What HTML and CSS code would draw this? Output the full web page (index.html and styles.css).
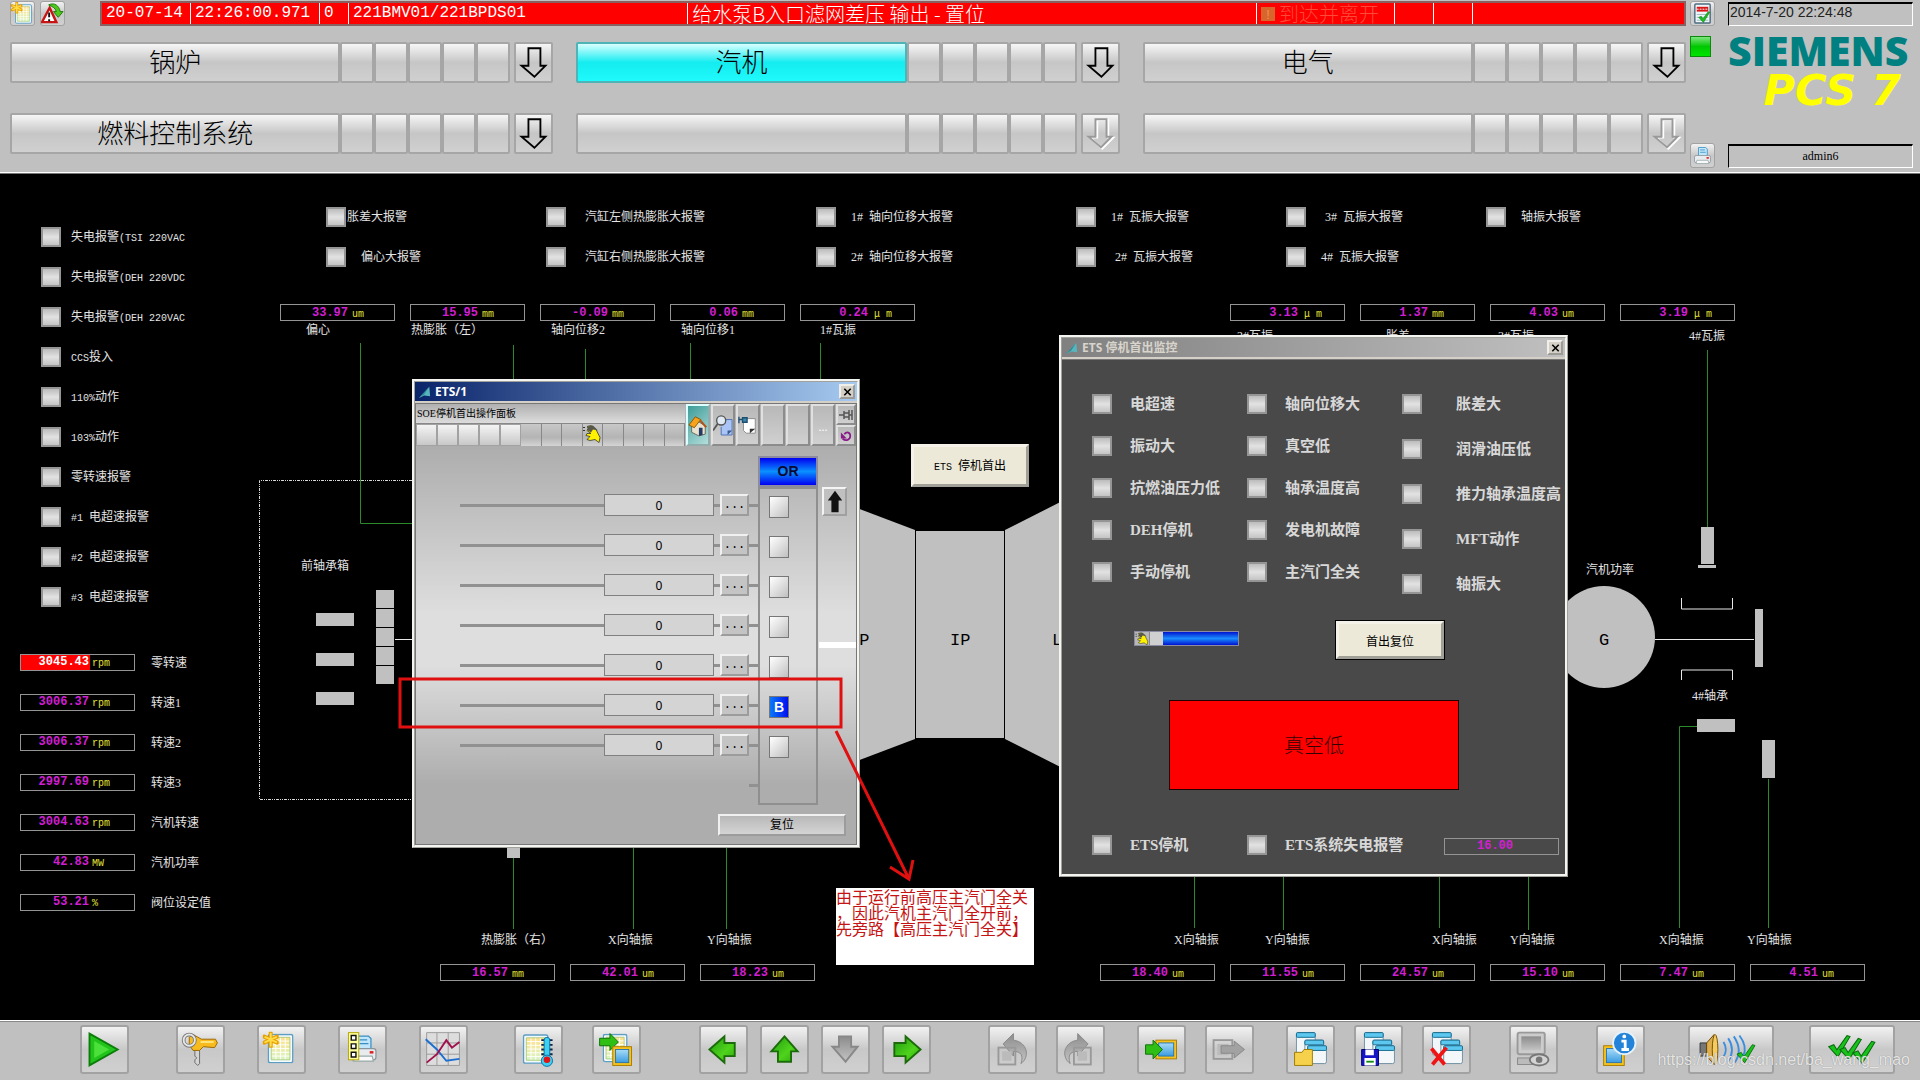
FILE: index.html
```html
<!DOCTYPE html>
<html lang="zh-CN">
<head>
<meta charset="utf-8">
<title>SIEMENS PCS 7 - 汽机 ETS</title>
<link rel="stylesheet" href="styles.css">
</head>
<body>
<svg class="defs" aria-hidden="true">
  <defs>
    <linearGradient id="gGreen" x1="0" y1="0" x2="1" y2="1"><stop offset="0" stop-color="#1d9a10"/><stop offset=".6" stop-color="#4fd31c"/><stop offset="1" stop-color="#2fa80f"/></linearGradient>
    <linearGradient id="gGrey" x1="0" y1="0" x2="0" y2="1"><stop offset="0" stop-color="#8c8c8c"/><stop offset="1" stop-color="#c4c4c4"/></linearGradient>
    <linearGradient id="gSheet" x1="0" y1="0" x2="0" y2="1"><stop offset="0" stop-color="#ffe08a"/><stop offset="1" stop-color="#d9f5c4"/></linearGradient>
    <linearGradient id="gBlue" x1="0" y1="0" x2="0" y2="1"><stop offset="0" stop-color="#a8dcf8"/><stop offset="1" stop-color="#3a9be0"/></linearGradient>
    <symbol id="sheet" viewBox="0 0 28 32"><rect x="1" y="1" width="26" height="30" rx="2" fill="#f4fbff" stroke="#5c9dc4" stroke-width="1.5"/><rect x="4" y="4" width="20" height="24" fill="url(#gSheet)"/><path d="M4 8h20M4 12h20M4 16h20M4 20h20M4 24h20M9 4v24M14 4v24M19 4v24" stroke="#fff" stroke-width="1"/><path d="M4 4h20v24H4z" fill="none" stroke="#9cc06c" stroke-width=".8"/></symbol>
    <symbol id="star" viewBox="0 0 16 16"><path d="M8 1v14M1.5 5l13 6M1.5 11l13-6" stroke="#e8a000" stroke-width="4" stroke-linecap="round"/><path d="M8 2v12M2.500 5.500l11 5M2.500 10.500l11-5" stroke="#ffdc48" stroke-width="2" stroke-linecap="round"/></symbol>
    <symbol id="down" viewBox="0 0 38 40"><path d="M13.500 4.500h13v19h5.500L20 35.500 6 23.500h7.500z" fill="none" stroke="currentColor" stroke-width="2"/></symbol>
    <symbol id="downOff" viewBox="0 0 38 40"><path d="M15.500 5.500h12v19h5.500L21 36.500 8 24.500h7.500z" fill="none" stroke="#fff" stroke-width="2"/><path d="M13.500 4.500h12v19h5.500L19.500 35 6 23.500h7.500z" fill="none" stroke="#999" stroke-width="2"/></symbol>
    <symbol id="siemensMark" viewBox="0 0 14 14"><path d="M12 1L0 14l6-3 7 1z" fill="#57b6bd"/><path d="M12 1L6 10l-6 4z" fill="#2a8a94"/></symbol>
    <symbol id="printer" viewBox="0 0 24 24"><path d="M7 2h9l2 2v9H7z" fill="#bfe6fa" stroke="#3b8fc0"/><path d="M9 5h6M9 8h7" stroke="#3b8fc0"/><rect x="2" y="12" width="20" height="9" rx="2" fill="#e8ecef" stroke="#8a949c"/><path d="M5 18h14l1 4H4z" fill="#fafafa" stroke="#9aa"/><rect x="17" y="14" width="3" height="2" fill="#d22"/></symbol>
    <symbol id="hand" viewBox="0 0 18 18"><path d="M4 2l4-1 5 4 4 8-1 5-4-3-5 1-3-1 3-3-4-1 1-2 4 0-4-3 1-2 4 2z" fill="#fff200" stroke="#222" stroke-width=".7"/><path d="M4 2l6-1 5 5-5-1-2 3-3-2z" fill="#57574a"/><path d="M0 3h2M0 6h2" stroke="#333"/></symbol>
    <symbol id="panels" viewBox="0 0 48 48"><g fill="#f3f7f9" stroke="#6d8ea0"><rect x="9" y="6" width="20" height="24" rx="2"/><rect x="18" y="14" width="20" height="24" rx="2"/><rect x="21" y="20" width="20" height="19" rx="2"/></g><g fill="#5cc8f0" stroke="#12688c"><rect x="9" y="6" width="20" height="5" rx="1"/><rect x="18" y="14" width="20" height="5" rx="1"/><rect x="21" y="20" width="20" height="5" rx="1"/></g></symbol>
    <symbol id="check" viewBox="0 0 24 24"><path d="M2 13l5-2 3 5L20 2l3 1L11 23z" fill="#17c21b" stroke="#086b0c"/></symbol>
  </defs>
</svg>

<header class="top">
  <div class="top-main">
    <div class="message-row">
      <button class="tool small" aria-label="消息列表"><svg viewBox="0 0 24 24"><use href="#sheet" x="4" y="2" width="18" height="21"/><use href="#star" x="0" y="0" width="12" height="12"/></svg></button>
      <button class="tool small" aria-label="报警跳转"><svg viewBox="0 0 24 24"><path d="M9 6L1 21h15z" fill="#fff" stroke="#c81414" stroke-width="2.500"/><path d="M8.500 11v5M8.500 18v2" stroke="#111" stroke-width="2"/><path d="M8 3c6-3 11 1 12 7h3l-5 6-5-6h3c-1-4-4-5-8-7z" fill="#4fc81c" stroke="#1c7a0a"/></svg></button>
      <div class="message">
        <span class="m-date">20-07-14</span><span class="m-time">22:26:00.971</span><span class="m-num">0</span><span class="m-tag">221BMV01/221BPDS01</span><span class="m-text cjk">给水泵B入口滤网差压 输出 - 置位</span><span class="m-state cjk"><i>!</i>到达并离开</span><span class="m-end"></span><span class="m-end"></span><span class="m-rest"></span>
      </div>
    </div>
    <nav class="areas">
      <div class="area"><button class="area-name">锅炉</button><i></i><i></i><i></i><i></i><i></i><button class="area-down" aria-label="展开"><svg><use href="#down"/></svg></button></div>
      <div class="area"><button class="area-name active">汽机</button><i></i><i></i><i></i><i></i><i></i><button class="area-down" aria-label="展开"><svg><use href="#down"/></svg></button></div>
      <div class="area"><button class="area-name">电气</button><i></i><i></i><i></i><i></i><i></i><button class="area-down" aria-label="展开"><svg><use href="#down"/></svg></button></div>
      <div class="area"><button class="area-name">燃料控制系统</button><i></i><i></i><i></i><i></i><i></i><button class="area-down" aria-label="展开"><svg><use href="#down"/></svg></button></div>
      <div class="area"><button class="area-name" aria-label="空"></button><i></i><i></i><i></i><i></i><i></i><button class="area-down" aria-label="展开" disabled><svg><use href="#downOff"/></svg></button></div>
      <div class="area"><button class="area-name" aria-label="空"></button><i></i><i></i><i></i><i></i><i></i><button class="area-down" aria-label="展开" disabled><svg><use href="#downOff"/></svg></button></div>
    </nav>
  </div>
  <div class="top-status">
    <button class="tool small" aria-label="确认消息"><svg viewBox="0 0 24 24"><rect x="4" y="2" width="16" height="20" rx="1" fill="#eef6fb" stroke="#4d6c80" stroke-width="1.500"/><path d="M6 5h12v5H6z" fill="#d81414"/><path d="M6 7.500h12" stroke="#fff" stroke-dasharray="2 1"/><path d="M6 13h12M6 16h12M6 19h12" stroke="#9bb"/><use href="#check" x="6" y="9" width="15" height="13"/></svg></button>
    <span class="run-lamp"></span>
    <button class="tool small printer" aria-label="打印"><svg viewBox="0 0 24 24"><use href="#printer" x="2" y="2" width="20" height="20"/></svg></button>
  </div>
  <div class="brand">
    <time class="clock">2014-7-20 22:24:48</time>
    <div class="siemens">SIEMENS</div>
    <div class="pcs">PCS 7</div>
    <div class="user">admin6</div>
  </div>
</header>

<main class="canvas">
  <svg class="mimic" aria-label="汽机监视图">
    <g transform="translate(0 -173)">
      <g class="pipe">
        <path d="M360.500 343V523.500H412"/>
        <path d="M513.500 345v40M585.500 349v40M690.500 343v40M820.500 343v40M1707.500 350v178"/>
        <path d="M513.500 858v71M633.500 846v83M726.500 846v83M1194.500 873v55M1283.500 873v57M1439.500 873v55M1528.500 873v57M1697 726.500h-17.500V928M1768.500 779v149"/>
      </g>
      <path class="boundary" d="M412 480.500H259.500V799.500H412"/>
      <g class="block">
        <rect x="316" y="613" width="38" height="13"/><rect x="316" y="653" width="38" height="13"/><rect x="316" y="692" width="38" height="13"/>
        <rect x="376" y="590" width="18" height="18"/><rect x="376" y="609" width="18" height="18"/><rect x="376" y="628" width="18" height="18"/><rect x="376" y="647" width="18" height="18"/><rect x="376" y="666" width="18" height="18"/>
        <rect x="507" y="844" width="13" height="14"/>
        <path d="M820 494L915 530V739L820 775z"/>
        <rect x="916" y="531" width="88" height="207"/>
        <path d="M1005 530L1100 482V787L1005 739z"/>
        <circle cx="1604" cy="637" r="51"/>
        <rect x="1701" y="527" width="13" height="37"/><rect x="1698" y="565" width="18" height="3"/>
        <rect x="1755" y="609" width="8" height="58"/>
        <rect x="1697" y="719" width="38" height="13"/><rect x="1762" y="740" width="13" height="38"/>
      </g>
      <path class="shaft" d="M395 639.500h17M1655 639.500h99M1681.500 598v11h51v-11M1681.500 680v-10h51v10"/>
      <g class="stage"><text x="849" y="645">HP</text><text x="950" y="645">IP</text><text x="1052" y="645">LP</text><text x="1599" y="645">G</text></g>
      <g class="tag">
        <text x="306" y="334">偏心</text><text x="411" y="334">热膨胀（左）</text><text x="551" y="334">轴向位移2</text><text x="681" y="334">轴向位移1</text><text x="820" y="334">1#瓦振</text>
        <text x="1237" y="340">2#瓦振</text><text x="1386" y="340">胀差</text><text x="1498" y="340">3#瓦振</text><text x="1689" y="340">4#瓦振</text>
        <text x="301" y="570">前轴承箱</text><text x="1586" y="574">汽机功率</text><text x="1692" y="700">4#轴承</text>
        <text x="481" y="944">热膨胀（右）</text><text x="608" y="944">X向轴振</text><text x="707" y="944">Y向轴振</text>
        <text x="1174" y="944">X向轴振</text><text x="1265" y="944">Y向轴振</text><text x="1432" y="944">X向轴振</text><text x="1510" y="944">Y向轴振</text><text x="1659" y="944">X向轴振</text><text x="1747" y="944">Y向轴振</text>
      </g>
      <g class="reading">
        <g transform="translate(280 304)"><rect/><text class="num" x="68" y="12">33.97</text><text class="unit" x="72" y="13">um</text></g>
        <g transform="translate(410 304)"><rect/><text class="num" x="68" y="12">15.95</text><text class="unit" x="72" y="13">mm</text></g>
        <g transform="translate(540 304)"><rect/><text class="num" x="68" y="12">-0.09</text><text class="unit" x="72" y="13">mm</text></g>
        <g transform="translate(670 304)"><rect/><text class="num" x="68" y="12">0.06</text><text class="unit" x="72" y="13">mm</text></g>
        <g transform="translate(800 304)"><rect/><text class="num" x="68" y="12">0.24</text><text class="unit" x="74" y="13">μ m</text></g>
        <g transform="translate(1230 304)"><rect/><text class="num" x="68" y="12">3.13</text><text class="unit" x="74" y="13">μ m</text></g>
        <g transform="translate(1360 304)"><rect/><text class="num" x="68" y="12">1.37</text><text class="unit" x="72" y="13">mm</text></g>
        <g transform="translate(1490 304)"><rect/><text class="num" x="68" y="12">4.03</text><text class="unit" x="72" y="13">um</text></g>
        <g transform="translate(1620 304)"><rect/><text class="num" x="68" y="12">3.19</text><text class="unit" x="74" y="13">μ m</text></g>
        <g transform="translate(440 964)"><rect/><text class="num" x="68" y="12">16.57</text><text class="unit" x="72" y="13">mm</text></g>
        <g transform="translate(570 964)"><rect/><text class="num" x="68" y="12">42.01</text><text class="unit" x="72" y="13">um</text></g>
        <g transform="translate(700 964)"><rect/><text class="num" x="68" y="12">18.23</text><text class="unit" x="72" y="13">um</text></g>
        <g transform="translate(1100 964)"><rect/><text class="num" x="68" y="12">18.40</text><text class="unit" x="72" y="13">um</text></g>
        <g transform="translate(1230 964)"><rect/><text class="num" x="68" y="12">11.55</text><text class="unit" x="72" y="13">um</text></g>
        <g transform="translate(1360 964)"><rect/><text class="num" x="68" y="12">24.57</text><text class="unit" x="72" y="13">um</text></g>
        <g transform="translate(1490 964)"><rect/><text class="num" x="68" y="12">15.10</text><text class="unit" x="72" y="13">um</text></g>
        <g transform="translate(1620 964)"><rect/><text class="num" x="68" y="12">7.47</text><text class="unit" x="72" y="13">um</text></g>
        <g transform="translate(1750 964)"><rect/><text class="num" x="68" y="12">4.51</text><text class="unit" x="72" y="13">um</text></g>
      </g>
    </g>
  </svg>

  <aside class="side">
    <ul class="lamps">
      <li><b class="lamp"></b><span>失电报警<span class="code">(TSI 220VAC</span></span></li>
      <li><b class="lamp"></b><span>失电报警<span class="code">(DEH 220VDC</span></span></li>
      <li><b class="lamp"></b><span>失电报警<span class="code">(DEH 220VAC</span></span></li>
      <li><b class="lamp"></b><span><span class="code">CCS</span>投入</span></li>
      <li><b class="lamp"></b><span><span class="code">110%</span>动作</span></li>
      <li><b class="lamp"></b><span><span class="code">103%</span>动作</span></li>
      <li><b class="lamp"></b>零转速报警</li>
      <li><b class="lamp"></b><span><span class="code">#1 </span>电超速报警</span></li>
      <li><b class="lamp"></b><span><span class="code">#2 </span>电超速报警</span></li>
      <li><b class="lamp"></b><span><span class="code">#3 </span>电超速报警</span></li>
    </ul>
    <ul class="speeds">
      <li><span class="box"><b class="alarm">3045.43</b><em>rpm</em></span>零转速</li>
      <li><span class="box"><b>3006.37</b><em>rpm</em></span>转速1</li>
      <li><span class="box"><b>3006.37</b><em>rpm</em></span>转速2</li>
      <li><span class="box"><b>2997.69</b><em>rpm</em></span>转速3</li>
      <li><span class="box"><b>3004.63</b><em>rpm</em></span>汽机转速</li>
      <li><span class="box"><b>42.83</b><em>MW</em></span>汽机功率</li>
      <li><span class="box"><b>53.21</b><em>%</em></span>阀位设定值</li>
    </ul>
  </aside>

  <ul class="alarms">
    <li class="tight"><b class="lamp"></b>胀差大报警</li>
    <li class="wide"><b class="lamp"></b>汽缸左侧热膨胀大报警</li>
    <li><b class="lamp"></b>1#&nbsp; 轴向位移大报警</li>
    <li><b class="lamp"></b>1#&nbsp; 瓦振大报警</li>
    <li class="wide"><b class="lamp"></b>3#&nbsp; 瓦振大报警</li>
    <li><b class="lamp"></b>轴振大报警</li>
    <li><b class="lamp"></b>偏心大报警</li>
    <li class="wide"><b class="lamp"></b>汽缸右侧热膨胀大报警</li>
    <li><b class="lamp"></b>2#&nbsp; 轴向位移大报警</li>
    <li class="wide"><b class="lamp"></b>2#&nbsp; 瓦振大报警</li>
    <li><b class="lamp"></b>4#&nbsp; 瓦振大报警</li>
  </ul>

  <button class="classic open-ets"><span class="code">ETS </span>停机首出</button>

  <section class="window ets1">
    <div class="title"><svg><use href="#siemensMark"/></svg><span>ETS/1</span><button class="close" aria-label="关闭"><svg viewBox="0 0 10 10"><path d="M1 1l8 8M9 1l-8 8"/></svg></button></div>
    <div class="faceplate">
      <div class="face-head">
        <div class="face-left">
          <div class="face-name">SOE停机首出操作面板</div>
          <div class="face-cells"><i></i><i></i><i></i><i></i><i></i><s></s><s></s><s></s><s><svg><use href="#hand"/></svg></s><s></s><s></s><s></s><s></s></div>
        </div>
        <button class="view on" aria-label="主视图"><svg viewBox="0 0 22 24"><path d="M4 12l7-4 8 5v9l-7 2-8-4z" fill="#e9e2cf" stroke="#665"/><path d="M1 12L8 3l6 3-7 9z" fill="#f6a21a" stroke="#8a5200"/><path d="M14 6l7 8-2 1-6-7z" fill="#b4521a"/><path d="M12 15h4v8l-4 1z" fill="#243a66"/></svg></button>
        <button class="view" aria-label="趋势"><svg viewBox="0 0 22 24"><path d="M10 6h11v17H9v-9" fill="#a9c4f5" stroke="#4a6db0"/><path d="M16 23v-5h5z" fill="#3a5a90"/><circle cx="9" cy="7" r="5" fill="#dfeaf5" stroke="#555" stroke-width="1.500"/><path d="M5 11l-5 7" stroke="#555" stroke-width="2"/></svg></button>
        <button class="view" aria-label="附注"><svg viewBox="0 0 22 24"><path d="M6 5h13v16H9l-3-3z" fill="#fff" stroke="#888"/><path d="M13 21v-5h6z" fill="#333"/><path d="M1 3v7M1 6h4M5 4v5h5V4z" fill="#3a88b0" stroke="#1f4f6e" stroke-width="1.500"/></svg></button>
        <button class="view" aria-label="视图 4"></button><button class="view" aria-label="视图 5"></button><button class="view more" aria-label="更多">...</button>
        <div class="view-small"><button aria-label="固定"><svg viewBox="0 0 14 12"><path d="M0 6h5M5 2v8M5 4h5v4H5M10 1v10M13 1v10M10 6h3" fill="none" stroke="#555" stroke-width="1.500"/></svg></button><button aria-label="返回"><svg viewBox="0 0 14 14"><path d="M3 10c4 4 9 1 9-3s-4-6-7-2" fill="none" stroke="#8a1a8a" stroke-width="2"/><path d="M1 3v7h7z" fill="#8a1a8a"/></svg></button></div>
      </div>
      <div class="face-body">
        <div class="inputs">
          <div class="input-row"><hr><input aria-label="输入 1" value="0"><hr class="short"><button>...</button><hr class="tail"></div>
          <div class="input-row"><hr><input aria-label="输入 2" value="0"><hr class="short"><button>...</button><hr class="tail"></div>
          <div class="input-row"><hr><input aria-label="输入 3" value="0"><hr class="short"><button>...</button><hr class="tail"></div>
          <div class="input-row"><hr><input aria-label="输入 4" value="0"><hr class="short"><button>...</button><hr class="tail"></div>
          <div class="input-row"><hr><input aria-label="输入 5" value="0"><hr class="short"><button>...</button><hr class="tail"></div>
          <div class="input-row"><hr><input aria-label="输入 6" value="0"><hr class="short"><button>...</button><hr class="tail"></div>
          <div class="input-row"><hr><input aria-label="输入 7" value="0"><hr class="short"><button>...</button><hr class="tail"></div>
          <div class="input-row last"><hr class="tail"></div>
        </div>
        <div class="gate">
          <div class="gate-name">OR</div>
          <div class="gate-box"><button aria-label="旁路 1"></button><button aria-label="旁路 2"></button><button aria-label="旁路 3"></button><button aria-label="旁路 4"></button><button aria-label="旁路 5"></button><button class="bypassed">B</button><button aria-label="旁路 7"></button></div>
        </div>
        <div class="output"><button aria-label="上一页"><svg viewBox="0 0 20 26"><path d="M10 1l8 11h-4v13H6V12H2z" fill="#111"/></svg></button><hr></div>
        <button class="reset">复位</button>
      </div>
    </div>
  </section>

  <section class="window ets2">
    <div class="title"><svg><use href="#siemensMark"/></svg><span>ETS 停机首出监控</span><button class="close" aria-label="关闭"><svg viewBox="0 0 10 10"><path d="M1 1l8 8M9 1l-8 8"/></svg></button></div>
    <div class="first-out">
      <div class="causes">
        <ul><li><b class="lamp"></b>电超速</li><li><b class="lamp"></b>振动大</li><li><b class="lamp"></b>抗燃油压力低</li><li><b class="lamp"></b>DEH停机</li><li><b class="lamp"></b>手动停机</li></ul>
        <ul><li><b class="lamp"></b>轴向位移大</li><li><b class="lamp"></b>真空低</li><li><b class="lamp"></b>轴承温度高</li><li><b class="lamp"></b>发电机故障</li><li><b class="lamp"></b>主汽门全关</li></ul>
        <ul class="far"><li><b class="lamp"></b>胀差大</li><li><b class="lamp"></b>润滑油压低</li><li><b class="lamp"></b>推力轴承温度高</li><li><b class="lamp"></b>MFT动作</li><li><b class="lamp"></b>轴振大</li></ul>
      </div>
      <div class="first-actions">
        <div class="block-icon"><svg><use href="#hand"/></svg><i></i><b></b></div>
        <button class="classic">首出复位</button>
      </div>
      <div class="first-cause">真空低</div>
      <div class="first-foot">
        <span class="cause"><b class="lamp"></b>ETS停机</span>
        <span class="cause"><b class="lamp"></b>ETS系统失电报警</span>
        <span class="box"><b>16.00</b></span>
      </div>
    </div>
  </section>

  <svg class="markup" aria-hidden="true">
    <g transform="translate(0 -173)"><rect x="400" y="679" width="441" height="48"/><path d="M836 731L909 879M890 867l19 12 4-19"/></g>
  </svg>
  <p class="note">由于运行前高压主汽门全关<br>，因此汽机主汽门全开前，<br>先旁路【高压主汽门全关】</p>
</main>

<footer class="toolbar">
  <div class="group"><button class="tool" aria-label="运行"><svg viewBox="0 0 48 48"><path d="M8 7L38 24 8 41z" fill="#22c41c" stroke="#0b7d08" stroke-width="2"/><path d="M13 15l16 9-16 9z" fill="#4be03a"/></svg></button></div>
  <div class="group key">
    <button class="tool" aria-label="登录"><svg viewBox="0 0 48 48"><path d="M18 23h5v16l-2 2-3-3v-3l2-2-2-2z" fill="#d4d4d4" stroke="#666"/><path d="M12 11l4-3 9 5 15 0 2 4-3 5-12-1-4 4h-7l-4-6z" fill="#f7bb1e" stroke="#9a6400"/><path d="M24 16h14" stroke="#ffe684" stroke-width="2"/><circle cx="12" cy="14" r="6" fill="none" stroke="#777" stroke-width="4"/><circle cx="12" cy="14" r="6" fill="none" stroke="#e6e6e6" stroke-width="2"/></svg></button>
  </div>
  <div class="group g3">
    <button class="tool" aria-label="新建消息"><svg viewBox="0 0 48 48"><use href="#sheet" x="9" y="7" width="28" height="32"/><use href="#star" x="4" y="5" width="17" height="17"/></svg></button>
    <button class="tool" aria-label="报表"><svg viewBox="0 0 48 48"><use href="#printer" x="9" y="5" width="32" height="36"/><rect x="9" y="6" width="11" height="29" fill="#ffff9c" stroke="#b4a400"/><path d="M12 9h5v5h-5zM12 18h5v5h-5zM12 27h5v5h-5z" fill="#fff" stroke="#111" stroke-width="1.500"/></svg></button>
    <button class="tool" aria-label="趋势"><svg viewBox="0 0 48 48"><path d="M6 6h35v35H6z" fill="#ddd"/><path d="M6 6v35h35M17 6v35M29 6v35M41 6v35M6 17h35M6 29h35M6 6h35" fill="none" stroke="#999" stroke-width="1"/><path d="M5 13l12 11 10 12 14-2" fill="none" stroke="#1c6fd0" stroke-width="2"/><path d="M6 38l11-9 10-15 6 8 8-6" fill="none" stroke="#a0104c" stroke-width="2"/></svg></button>
  </div>
  <div class="group g4">
    <button class="tool" aria-label="测量值"><svg viewBox="0 0 48 48"><use href="#sheet" x="7" y="7" width="28" height="33"/><path d="M27 14h12M27 19h12M27 24h12M27 29h12" stroke="#124" stroke-width="2"/><rect x="30" y="11" width="6" height="24" rx="3" fill="#3ed0f0" stroke="#0870a8"/><circle cx="33" cy="36" r="6" fill="#3ed0f0" stroke="#0870a8"/><circle cx="33" cy="35" r="3.500" fill="#e01414"/></svg></button>
    <button class="tool" aria-label="消息跳转画面"><svg viewBox="0 0 48 48"><use href="#sheet" x="9" y="7" width="27" height="31"/><path d="M6 12h11V7l9 9-9 9v-5H6z" fill="#2fbf14" stroke="#0b6d08"/><rect x="20" y="21" width="20" height="20" fill="#f7c21c" stroke="#a87c00"/><rect x="23" y="24" width="14" height="14" fill="url(#gBlue)" stroke="#2774b0"/></svg></button>
  </div>
  <div class="group g5 tightgap">
    <button class="tool" aria-label="向左"><svg viewBox="0 0 48 48"><path d="M9 24L25 10v7h11v14H25v7z" fill="url(#gGreen)" stroke="#1b6b0a" stroke-width="2"/></svg></button>
    <button class="tool" aria-label="向上"><svg viewBox="0 0 48 48"><path d="M24 10l14 16h-7v11H17V26h-7z" fill="url(#gGreen)" stroke="#1b6b0a" stroke-width="2"/></svg></button>
    <button class="tool" aria-label="向下" disabled><svg viewBox="0 0 48 48"><path d="M24 37L10 21h7V10h13v11h7z" fill="url(#gGrey)" stroke="#888" stroke-width="2"/></svg></button>
    <button class="tool" aria-label="向右"><svg viewBox="0 0 48 48"><path d="M39 24L23 10v7H11v14h12v7z" fill="url(#gGreen)" stroke="#1b6b0a" stroke-width="2"/></svg></button>
  </div>
  <div class="group g6 mid">
    <button class="tool" aria-label="上一画面" disabled><svg viewBox="0 0 48 48"><path d="M14 18L25 7v7c15 2 18 18 8 25 3-9 0-13-8-13v5z" fill="url(#gGrey)" stroke="#888"/><rect x="9" y="22" width="18" height="18" fill="none" stroke="#999" stroke-width="2"/><rect x="13" y="26" width="10" height="10" fill="#bbb"/></svg></button>
    <button class="tool" aria-label="下一画面" disabled><svg viewBox="0 0 48 48"><path d="M32 18L21 7v7C6 16 3 32 13 39c-3-9 0-13 8-13v5z" fill="url(#gGrey)" stroke="#888"/><rect x="17" y="22" width="18" height="18" fill="none" stroke="#999" stroke-width="2"/><rect x="21" y="26" width="10" height="10" fill="#bbb"/></svg></button>
  </div>
  <div class="group g3 mid">
    <button class="tool" aria-label="存储画面"><svg viewBox="0 0 48 48"><rect x="18" y="14" width="22" height="20" fill="#f7c21c" stroke="#a87c00"/><rect x="21" y="17" width="16" height="14" fill="url(#gBlue)" stroke="#2774b0"/><path d="M7 19h8v-5l10 10-10 10v-5H7z" fill="#2fbf14" stroke="#0b6d08"/></svg></button>
    <button class="tool" aria-label="调用画面" disabled><svg viewBox="0 0 48 48"><rect x="7" y="14" width="20" height="20" fill="none" stroke="#999" stroke-width="2"/><rect x="11" y="18" width="12" height="12" fill="#bbb"/><path d="M15 20h14v-5l11 9-11 9v-5H15z" fill="#a2a2a2" stroke="#888"/></svg></button>
  </div>
  <div class="group g3 mid">
    <button class="tool" aria-label="打开布局"><svg viewBox="0 0 48 48"><use href="#panels"/><path d="M7 27h8l2-3h9v17H7z" fill="#f6d24c" stroke="#9c7800"/></svg></button>
    <button class="tool" aria-label="保存布局"><svg viewBox="0 0 48 48"><use href="#panels"/><path d="M6 24h18v17H6z" fill="#1616c4" stroke="#00006c"/><path d="M10 24h9v6h-9zM9 33h12v8H9z" fill="#fff"/><path d="M11 37h8" stroke="#148c14" stroke-width="2"/></svg></button>
    <button class="tool" aria-label="删除布局"><svg viewBox="0 0 48 48"><use href="#panels"/><path d="M8 23l14 17M24 22L9 40" stroke="#f01414" stroke-width="4"/></svg></button>
  </div>
  <div class="group g7"><button class="tool" aria-label="屏幕" disabled><svg viewBox="0 0 48 48"><rect x="7" y="6" width="29" height="23" rx="2" fill="#ccc" stroke="#999" stroke-width="2"/><rect x="11" y="10" width="21" height="15" fill="url(#gGrey)"/><rect x="7" y="33" width="20" height="7" fill="#bbb" stroke="#888"/><ellipse cx="30" cy="35" rx="10" ry="6" fill="#d4d4d4" stroke="#777" stroke-width="2"/><circle cx="30" cy="35" r="3.500" fill="#777"/></svg></button></div>
  <div class="group g7"><button class="tool" aria-label="画面信息"><svg viewBox="0 0 48 48"><rect x="6" y="20" width="22" height="21" fill="#f7c21c" stroke="#a87c00"/><rect x="9" y="23" width="16" height="15" fill="url(#gBlue)" stroke="#2774b0"/><circle cx="28" cy="17" r="12" fill="#2383d8" stroke="#e6f2fb" stroke-width="2"/><path d="M25 15h4v9M25 24h8" fill="none" stroke="#fff" stroke-width="3"/><circle cx="28" cy="10" r="2" fill="#fff"/></svg></button></div>
  <div class="group g8"><button class="tool big" aria-label="声音确认"><svg viewBox="0 0 86 48"><path d="M10 17h7v14h-7z" fill="#777" stroke="#333"/><path d="M17 17l8-9v32l-8-9z" fill="#e0b050" stroke="#664400"/><ellipse cx="26" cy="24" rx="3" ry="16" fill="#f4cc60" stroke="#704c00"/><path d="M35 16q5 8 0 16M40 12q8 12 0 25M46 10q10 15 1 28M52 9q9 12 4 22" fill="none" stroke="#3a8ee0" stroke-width="2"/><use href="#check" x="45" y="17" width="27" height="22"/></svg></button></div>
  <div class="group g9"><button class="tool big" aria-label="全部确认"><svg viewBox="0 0 86 48"><use href="#check" x="14" y="7" width="30" height="26"/><use href="#check" x="26" y="10" width="30" height="26"/><use href="#check" x="39" y="13" width="32" height="27"/></svg></button></div>
  <span class="watermark">https://blog.csdn.net/ba_wang_mao</span>
</footer>
</body>
</html>
```
FILE: styles.css
```css
* { box-sizing: border-box; }
body {
  margin: 0;
  min-height: 100vh;
  display: flex;
  flex-direction: column;
  background: #000;
  color: #000;
  font: 12px/16px "Liberation Serif", "Noto Sans CJK SC", serif;
}
ul, p { margin: 0; padding: 0; list-style: none; }
button { margin: 0; padding: 0; font: inherit; color: #000; }
button svg { display: block; }
i, em { font-style: normal; }
.defs { position: absolute; width: 0; height: 0; }
.code { font: 10px "Liberation Mono", monospace; white-space: pre; }

/* Header */
.top {
  display: grid;
  grid-template-columns: minmax(0, 1fr) 25px 198px;
  padding: 1px 7px 0 10px;
  height: 173px;
  background: #c0c0c0;
  border-bottom: 1px solid #fff;
}
.top-main { padding-right: 4px; }
.message-row { display: flex; gap: 5px; height: 26px; }
.tool {
  width: 49px;
  height: 49px;
  border: 2px solid #a2a2a2;
  border-radius: 3px;
  background: linear-gradient(#f2f2f2, #c8c8c8 50%, #d0d0d0);
}
.tool svg { width: 100%; height: 100%; }
.tool.small { width: 25px; height: 25px; border-width: 1px; flex: none; }
.message {
  flex: 1;
  display: flex;
  margin-left: 30px;
  height: 25px;
  border: 2px solid #8a6060;
  background: #f00;
  color: #fff;
  font: 16px/21px "Liberation Mono", monospace;
  white-space: nowrap;
}
.message span { border-right: 1px solid #fff; padding-left: 4px; }
.message .cjk { font: 300 20px/21px "Noto Sans CJK SC", sans-serif; }
.m-date { width: 89px; }
.m-time { width: 129px; }
.m-num { width: 29px; }
.m-tag { flex: 338; }
.m-text { flex: 570; }
.message .m-state { width: 138px; color: #ff4a3a; display: flex; gap: 4px; }
.m-state i { width: 14px; height: 14px; margin-top: 4px; background: #d8662c; color: #ffb060; font-size: 12px; line-height: 14px; text-align: center; }
.m-end { width: 39px; }
.message .m-rest { width: 211px; border: 0; }
.areas {
  display: grid;
  grid-template-columns: repeat(3, minmax(0, 1fr));
  gap: 30px 23px;
  padding-top: 15px;
}
.area { display: flex; height: 41px; }
.area > * { border: 2px solid #a6a6a6; border-radius: 2px; background: linear-gradient(#f6f6f6, #c6c6c6 50%, #d0d0d0); }
.area i { width: 34px; }
.area-name { flex: 1; padding-bottom: 4px; font: 300 26px/32px "Noto Sans CJK SC", sans-serif; }
.area .active { border-color: #4fb4b8; background: linear-gradient(#d8ffff, #14ecf0 50%, #20fafc); }
.area-down { width: 39px; margin-left: 4px; }
.area-down svg { width: 35px; height: 37px; }
.top-status { display: flex; flex-direction: column; }
.run-lamp { width: 21px; height: 21px; margin-top: 10px; border: 1px solid #0a8c0a; background: linear-gradient(#7fe47f, #00c800 50%, #00e400); }
.printer { margin-top: auto; margin-bottom: 4px; }
.brand { display: flex; flex-direction: column; padding: 1px 0 4px 13px; }
.clock, .user { height: 24px; border: 1px solid; border-color: #000 #fff #fff #000; border-top-width: 2px; }
.clock { padding-left: 1px; color: #222; font: 14px/17px "Liberation Sans", sans-serif; }
.siemens { margin-top: 4px; color: #008080; font: 800 41px/40px "Open Sans", sans-serif; }
.pcs { padding-right: 12px; color: #ff0; font: italic 700 43px/40px "DejaVu Sans", sans-serif; text-align: right; }
.user { margin-top: auto; line-height: 20px; text-align: center; }

/* Process picture */
.canvas {
  position: relative;
  flex: 1;
  min-height: 847px;
  display: flex;
  align-items: flex-start;
  border-top: 1px solid #777;
  color: #e4e4e4;
  overflow: hidden;
}
.mimic, .markup { position: absolute; inset: -1px 0 0; width: 100%; height: 100%; pointer-events: none; }
.pipe { fill: none; stroke: #2a8a2a; stroke-width: 1; }
.boundary { fill: none; stroke: #d8d8d8; stroke-dasharray: 3 1 1 1 1 1; }
.block { fill: #c0c0c0; }
.shaft { fill: none; stroke: #e8e8e8; }
.stage { fill: #000; font: 17px "Liberation Mono", monospace; }
.tag { fill: #e4e4e4; }
.reading rect { width: 114px; height: 16px; x: .5px; y: .5px; fill: none; stroke: #949494; }
.num { fill: #d21ed2; font: 700 12px "Liberation Mono", monospace; text-anchor: end; }
.unit { fill: #e2e23c; font: 10px "Liberation Mono", monospace; }
.lamp {
  flex: none;
  width: 20px;
  height: 20px;
  border: 2px solid #959595;
  background: linear-gradient(#bcbcbc, #e2e2e2 50%, #c4c4c4);
}
.side, .alarms { position: relative; }
.side { width: 326px; padding: 53px 0 0 20px; flex: none; }
.lamps { display: grid; gap: 20px; padding-left: 21px; }
.lamps li, .alarms li, .speeds li { display: flex; align-items: center; white-space: nowrap; }
.lamps li { gap: 10px; height: 20px; }
.speeds { display: grid; gap: 23px; margin-top: 47px; }
.speeds li { gap: 16px; height: 17px; }
.box { display: flex; width: 115px; height: 17px; border: 1px solid #949494; font: 12px/15px "Liberation Mono", monospace; }
.box b { width: 69px; padding-right: 1px; color: #d21ed2; text-align: right; }
.box .alarm { background: #f00; color: #fff; }
.box em { padding-left: 2px; color: #e2e23c; font-size: 10px; line-height: 17px; }
.alarms { display: grid; grid-template-columns: 220px 270px 260px 210px 200px 120px; gap: 20px 0; padding-top: 33px; }
.alarms li { gap: 15px; height: 20px; }
.alarms .tight { gap: 1px; }
.alarms .wide { gap: 19px; }
.classic { border: 3px outset #f4f2e8; outline: 1px solid #000; background: #ece9d8; font-size: 12px; }
.open-ets { position: absolute; left: 911px; top: 270px; width: 118px; height: 43px; }

/* Pop-up windows */
.window { position: absolute; border: 3px ridge #f4f4f0; background: #d4d0c8; color: #000; }
.ets1 { left: 412px; top: 205px; width: 448px; }
.ets2 { left: 1059px; top: 161px; width: 509px; }
.title { display: flex; align-items: center; gap: 4px; height: 19px; padding: 0 2px 0 4px; color: #fff; font: 700 12px/18px "Noto Sans", "Noto Sans CJK SC", sans-serif; }
.title svg { width: 12px; height: 12px; }
.ets1 .title { background: linear-gradient(90deg, #0a246a, #a6caf0); }
.ets2 .title { background: linear-gradient(90deg, #808080, #c0c0c0); color: #d8d4cc; }
.close { display: grid; place-items: center; width: 16px; height: 15px; margin-left: auto; border: 2px outset #f0eee8; background: #d4d0c8; }
.close svg { width: 9px; height: 8px; stroke: #000; stroke-width: 2; }
.faceplate { margin-top: 2px; border: 1px solid #777; }
.face-head { display: flex; gap: 1px; height: 42px; background: #b4b4b4; }
.face-left { flex: 1; }
.face-name { height: 20px; padding-left: 1px; background: linear-gradient(#b0b0b0, #dcdcdc); border-bottom: 1px solid #888; font-size: 10px; line-height: 19px; white-space: nowrap; }
.face-cells { display: flex; height: 22px; }
.face-cells i { width: 21px; border: 1px solid #a2a2a2; background: linear-gradient(#f4f4f4, #c8c8c8); }
.face-cells s { flex: 1; border-right: 1px solid #888; background: linear-gradient(#c8c8c8, #b4b4b4 60%, #d4d4d4); }
.face-cells s svg { display: block; width: 18px; height: 19px; }
.view, .view-small button { border: 2px outset #e0e0e0; background: linear-gradient(#b8b8b8, #d0d0d0); }
.view { width: 24px; height: 42px; }
.view svg { width: 20px; height: 24px; }
.view.on { border-color: #dff; background: linear-gradient(135deg, #3c9c98, #b4dedc); }
.view.more { color: #fff; padding-top: 4px; }
.view-small { display: grid; width: 20px; }
.view-small button { display: grid; place-items: center; }
.view-small svg { width: 14px; height: 12px; }
.face-body {
  display: grid;
  grid-template-columns: minmax(0, 1fr) 60px 38px;
  padding-bottom: 8px;
  background: linear-gradient(#adadad, #dedede 42%, #dedede 55%, #adadad 85%);
}
.inputs { display: grid; align-content: start; gap: 18px; padding: 48px 0 0 44px; }
.input-row { display: flex; align-items: center; height: 22px; }
.input-row hr { flex: 1; height: 3px; margin: 0; border: 0; background: #919191; }
.input-row .short { flex: 0 0 6px; }
.input-row .tail { flex: 0 0 9px; }
.input-row.last { justify-content: flex-end; }
.input-row input { width: 110px; height: 22px; border: 1px solid #808080; background: #d4d4d4; font: 12px "Noto Sans", sans-serif; text-align: center; padding: 0; }
.input-row button { width: 29px; height: 22px; border: 2px outset #f0f0f0; background: #c4c4c4; font: 12px/16px "Liberation Mono", monospace; }
.gate { padding-top: 10px; }
.gate-name { height: 31px; border: 2px solid #8a8aa0; background: linear-gradient(#0000f0, #0a90ff 50%, #0000f0); color: #0a0a30; font: 700 14px/27px "Liberation Sans", sans-serif; text-align: center; }
.gate-box { display: grid; align-content: start; gap: 18px; height: 318px; padding: 7px 0 0 9px; border: 2px solid #8f8f8f; }
.gate-box button { width: 20px; height: 22px; border: 1px solid #777; background: linear-gradient(135deg, #fff, #c0c0c0); }
.gate-box .bypassed { background: linear-gradient(90deg, #0a78f8, #0010f0); color: #fff; font: 700 14px/20px "Liberation Sans", sans-serif; }
.output { padding-top: 41px; }
.output button { display: grid; place-items: center; width: 25px; height: 29px; margin-left: 4px; border: 2px outset #f4f4f4; background: #c0c0c0; }
.output svg { width: 18px; height: 25px; }
.output hr { height: 6px; margin: 126px 0 0 1px; border: 0; background: #fff; }
.reset { grid-column: 1 / -1; justify-self: end; width: 128px; height: 22px; margin: 9px 10px 0 0; border: 2px outset #f0f0f0; background: linear-gradient(#b8b8b8, #d4d4d4); font-size: 12px; }

.first-out { margin-top: 2px; padding: 34px 2px 19px 30px; border-top: 1px solid #777; background: #494949; color: #d8d8d8; font: 700 15px/20px "Liberation Serif", "Noto Sans CJK SC", serif; }
.causes { display: grid; grid-template-columns: 155px 155px 1fr; align-items: start; }
.causes ul { display: flex; flex-direction: column; gap: 22px; }
.causes .far { gap: 25px; }
.causes li, .cause { display: flex; align-items: center; gap: 18px; height: 20px; white-space: nowrap; }
.causes .far li { gap: 34px; }
.first-actions { display: flex; justify-content: space-between; margin: 27px 119px 0 42px; }
.block-icon { display: grid; grid-template-columns: 14px 14px 1fr; width: 105px; height: 15px; margin-top: 10px; border: 1px solid #8a8aa0; background: #b8b8b8; }
.block-icon svg { width: 14px; height: 13px; }
.block-icon i { background: #d0d0d0; border-left: 1px solid #888; }
.block-icon b { background: linear-gradient(#0014d0, #1a8cff 50%, #0014d0); }
.first-actions .classic { width: 108px; height: 38px; font: 12px "Noto Sans CJK SC", sans-serif; }
.first-cause { width: 290px; height: 90px; margin: 41px 0 0 77px; border: 1px solid #200; background: #f00; color: #300; font: 300 20px/88px "Noto Sans CJK SC", sans-serif; text-align: center; }
.first-foot { display: grid; grid-template-columns: 155px 197px 1fr; align-items: end; margin-top: 45px; }
.markup rect, .markup path { fill: none; stroke: #e01010; stroke-width: 3; }
.note { position: absolute; left: 836px; top: 714px; width: 198px; height: 77px; background: #fff; color: #c41414; font: 16px/16px "Noto Sans CJK SC", sans-serif; white-space: nowrap; }

/* Key area */
.toolbar {
  position: relative;
  display: flex;
  height: 60px;
  padding: 4px 0 0 80px;
  background: #c0c0c0;
  border-top: 1px solid #fff;
  box-shadow: inset 0 1px #888;
}
.group { display: flex; gap: 32px; }
.g3 { margin-left: 32px; }
.key { margin-left: 47px; }
.g4 { margin-left: 46px; gap: 29px; }
.g5 { margin-left: 58px; }
.tightgap { gap: 12px; }
.g6 { margin-left: 57px; }
.mid { gap: 19px; }
.g7 { margin-left: 38px; }
.g8 { margin-left: 43px; }
.g9 { margin-left: 35px; }
.tool.big { width: 86px; }
.watermark { position: absolute; right: 10px; bottom: 10px; color: rgba(255, 255, 255, .8); font: 16px/20px "Liberation Sans", sans-serif; text-shadow: 0 0 1px #777; }
```
